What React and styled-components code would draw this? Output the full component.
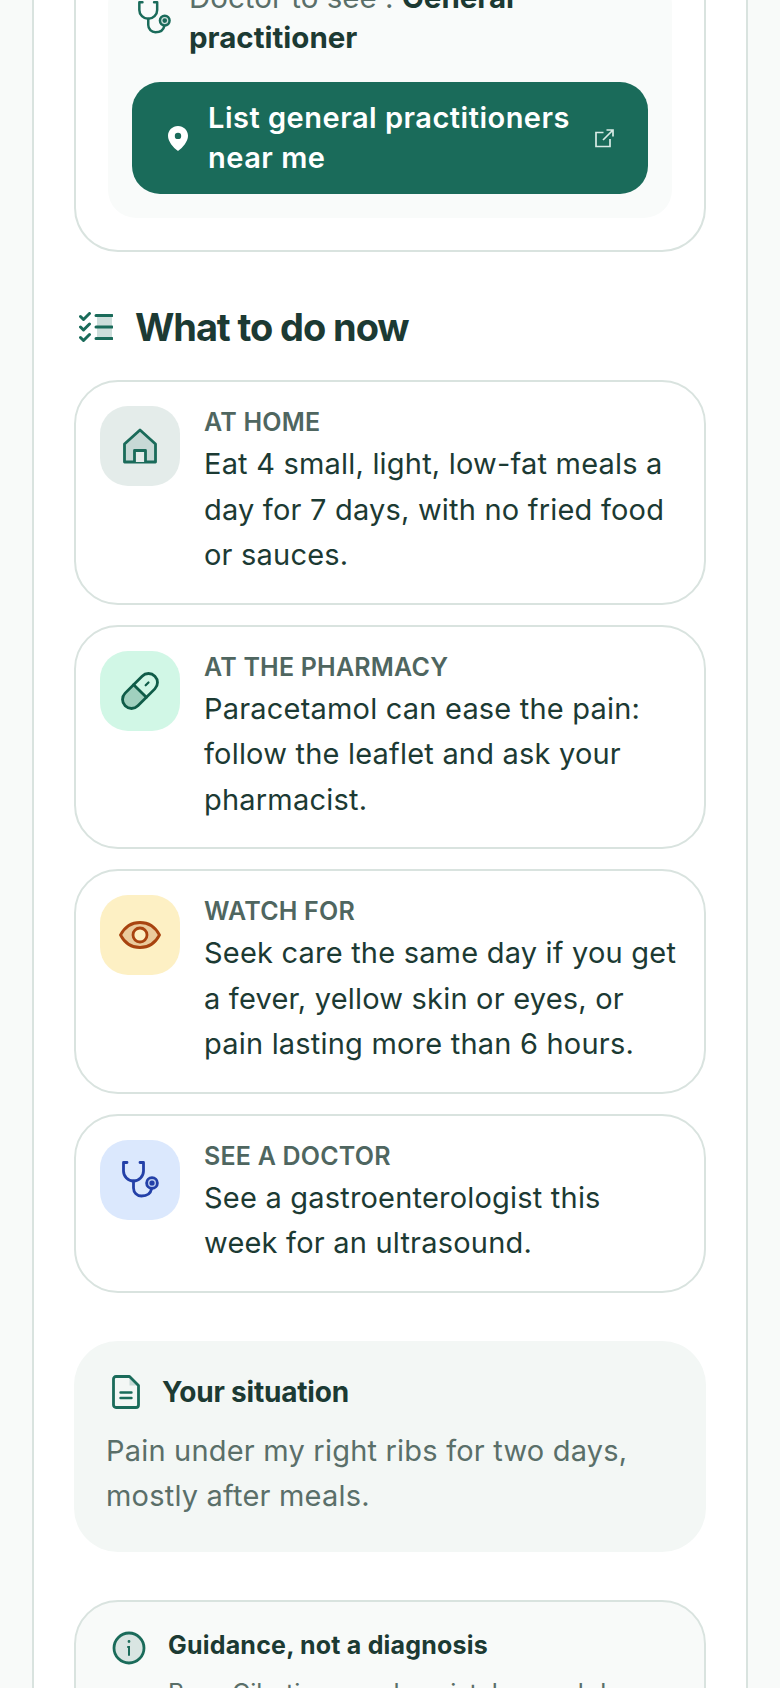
import React from "react"
import styled, { createGlobalStyle } from "styled-components"

const GlobalStyle = createGlobalStyle`
  html, body {
    margin: 0;
    padding: 0;
    height: 1688px;
    overflow: hidden;
    background: #f8faf9;
  }
  * {
    box-sizing: border-box;
  }
`

const Page = styled.main`
  width: 716px;
  height: 1688px;
  margin: 0 auto 0 32px;
  padding: 0 40px;
  background: #fff;
  border-left: 2px solid #d9e3df;
  border-right: 2px solid #d9e3df;
  overflow: hidden;
  font-family: Inter, "Liberation Sans", sans-serif;
  color: #1c3a33;
`

const TopCard = styled.section`
  margin-top: -60px;
  padding: 0 32px 32px;
  border: 2px solid #d9e3df;
  border-top: 0;
  border-radius: 0 0 44px 44px;
  height: 312px;
  display: flex;
  flex-direction: column;
  justify-content: flex-end;
`

const DoctorPanel = styled.div`
  background: #f9fbfa;
  border-radius: 28px;
  padding: 0 24px 24px;
`

const DoctorRow = styled.div`
  display: flex;
  gap: 18px;
  align-items: center;
  margin-bottom: 25px;
  padding-left: 6px;
  color: #1a6b5a;
`

const DoctorText = styled.p`
  margin: 0;
  font-size: 29.5px;
  line-height: 40px;
  color: #5a6f69;

  b {
    font-weight: 700;
    color: #1c3a33;
  }
`

const ActionButton = styled.a`
  display: flex;
  align-items: center;
  gap: 20px;
  height: 112px;
  padding: 0 34px 0 36px;
  border-radius: 28px;
  background: #1a6b5a;
  color: #fff;
  font-size: 29px;
  font-weight: 600;
  letter-spacing: 0.5px;
  line-height: 40px;

  span {
    flex: 1;
  }
`

const SectionTitle = styled.h2`
  display: flex;
  align-items: center;
  gap: 22px;
  margin: 51px 0 29px 5px;
  font-size: 38px;
  line-height: 48px;
  font-weight: 700;
  letter-spacing: -1.1px;
  color: #1c3a33;
`

const StepList = styled.div`
  display: flex;
  flex-direction: column;
  gap: 20px;
`

const StepCard = styled.article`
  display: flex;
  gap: 24px;
  padding: 24px 24px 25px;
  border: 2px solid #d9e3df;
  border-radius: 44px;
  background: #fff;
`

const IconTile = styled.div`
  flex: none;
  width: 80px;
  height: 80px;
  display: flex;
  align-items: center;
  justify-content: center;
  border-radius: 28px;
  background: ${p => p.$bg};
  color: ${p => p.$fg};
`

const StepLabel = styled.div`
  margin-bottom: 3px;
  font-size: 25px;
  line-height: 32px;
  font-weight: 600;
  letter-spacing: 0.2px;
  color: #4f6660;
  text-transform: uppercase;
`

const StepText = styled.p`
  margin: 0;
  font-size: 29px;
  line-height: 45.5px;
  letter-spacing: 0.2px;
  color: #1c3a33;
`

const SituationPanel = styled.section`
  margin-top: 48px;
  padding: 31px 32px;
  height: 211px;
  border-radius: 44px;
  background: #f3f7f5;
`

const SituationTitle = styled.h3`
  display: flex;
  align-items: center;
  gap: 22px;
  margin: 0 0 16px;
  padding-left: 6px;
  font-size: 28px;
  line-height: 40px;
  font-weight: 700;
  letter-spacing: -0.2px;
  color: #1c3a33;
`

const SituationText = styled.p`
  margin: 0;
  font-size: 29px;
  line-height: 45px;
  letter-spacing: 0.2px;
  color: #5a6f69;
`

const NoticeCard = styled.section`
  display: flex;
  gap: 22px;
  margin-top: 48px;
  padding: 29px 44px 30px 36px;
  border: 2px solid #d9e3df;
  border-radius: 44px;
  background: #f8faf9;
`

const NoticeTitle = styled.h3`
  margin: 0 0 14px;
  font-size: 25px;
  line-height: 28px;
  font-weight: 700;
  letter-spacing: 0.2px;
  color: #1c3a33;
`

const NoticeText = styled.p`
  margin: 0;
  font-size: 25px;
  line-height: 40px;
  color: #5a6f69;
`

const Stethoscope = ({ width = 37, height = 37 }) => (
  <svg width={width} height={height} viewBox="0 0 37 37" fill="none" stroke="currentColor" strokeWidth="2.8" strokeLinecap="round" strokeLinejoin="round" style={{ flex: "none" }}>
    <path d="M5 1.5H1.5V10a10 10 0 0 0 20 0V1.5H18" />
    <path d="M11.5 20v7a8 8 0 0 0 8 8c5 0 9-2 10-7" />
    <circle cx="30" cy="22" r="5.4" fill="currentColor" fillOpacity="0.18" />
    <circle cx="30" cy="22" r="1.2" fill="currentColor" />
  </svg>
)

const HomeIcon = () => (
  <svg width="36" height="36" viewBox="0 0 36 36" fill="none" stroke="currentColor" strokeWidth="2.8" strokeLinejoin="round">
    <path d="M18 2 2.5 16v18h31V16z" fill="currentColor" fillOpacity="0.14" />
    <path d="M12.5 34V22.5h11V34" fill="#e4ecea" />
  </svg>
)

const PillIcon = () => (
  <svg width="38" height="38" viewBox="0 0 38 38" fill="none" stroke="currentColor" strokeWidth="2.8" strokeLinecap="round">
    <g transform="translate(19 19) rotate(45)">
      <path d="M-9 0H9V12a9 9 0 0 1-18 0z" fill="currentColor" fillOpacity="0.25" stroke="none" />
      <rect x="-9" y="-21" width="18" height="42" rx="9" />
      <path d="M-9 0H9" />
      <path d="M0-12V-8" strokeWidth="2.2" />
    </g>
  </svg>
)

const EyeIcon = () => (
  <svg width="42" height="28" viewBox="0 0 42 28" fill="none" stroke="currentColor" strokeWidth="2.8" strokeLinejoin="round">
    <path d="M1.5 14C6 5.5 13 1.5 21 1.5S36 5.5 40.5 14C36 22.5 29 26.5 21 26.5S6 22.5 1.5 14z" fill="currentColor" fillOpacity="0.22" />
    <circle cx="21" cy="14" r="7" fill="#fdf0c4" />
  </svg>
)

const DocIcon = () => (
  <svg width="28" height="34" viewBox="0 0 28 34" fill="none" stroke="#1a6b5a" strokeWidth="2.8" strokeLinejoin="round" strokeLinecap="round" style={{ flex: "none" }}>
    <path d="M17.5 2v8.5H26z" fill="#1a6b5a" fillOpacity="0.2" stroke="none" />
    <path d="M4 1.5h13.5l9 9V30a2.5 2.5 0 0 1-2.5 2.5H4A2.5 2.5 0 0 1 1.5 30V4A2.5 2.5 0 0 1 4 1.5z" />
    <path d="M8.5 17.5h11M8.5 23h11" strokeWidth="2.4" />
  </svg>
)

const InfoIcon = () => (
  <svg width="34" height="34" viewBox="0 0 34 34" fill="none" stroke="#1a6b5a" strokeWidth="2.8" strokeLinecap="round" style={{ flex: "none" }}>
    <circle cx="17" cy="17" r="15" fill="#1a6b5a" fillOpacity="0.14" />
    <path d="M16 16h1v8" strokeWidth="2" />
    <circle cx="17" cy="10.5" r="0.6" fill="#1a6b5a" strokeWidth="1.6" />
  </svg>
)

const ChecklistIcon = () => (
  <svg width="34" height="30" viewBox="0 0 34 30" fill="none" stroke="#1a6b5a" strokeWidth="3" strokeLinecap="round" strokeLinejoin="round" style={{ flex: "none" }}>
    <rect x="18" y="3.5" width="15" height="23" fill="#1a6b5a" fillOpacity="0.22" stroke="none" />
    <path d="M1.5 4.5 4.5 7.5 10.5 1.5M1.5 15 4.5 18 10.5 12M1.5 25.5 4.5 28.5 10.5 22.5" />
    <path d="M17 3.5h16M17 15h16M17 26.5h16" />
  </svg>
)

const PinIcon = () => (
  <svg width="20" height="25" viewBox="0 0 20 25" style={{ flex: "none" }}>
    <path fillRule="evenodd" fill="#fff" d="M10 0c5.5 0 10 4.3 10 9.7 0 5.7-5 11.6-10 15.3C5 21.3 0 15.4 0 9.7 0 4.3 4.5 0 10 0zm0 6.7a3.2 3.2 0 1 0 0 6.4 3.2 3.2 0 0 0 0-6.4z" />
  </svg>
)

const ExternalIcon = () => (
  <svg width="19" height="19" viewBox="0 0 19 19" fill="none" stroke="#d9ebe6" strokeWidth="1.7" style={{ flex: "none" }}>
    <path d="M8.5 3.5H1v14h14V10" />
    <path d="M8 11 17.5 1.5M11.5 1h6.5v6.5" />
  </svg>
)

const STEPS = [
  {
    label: "At home",
    text: "Eat 4 small, light, low-fat meals a day for 7 days, with no fried food or sauces.",
    bg: "#e4ecea",
    fg: "#1a6b5a",
    icon: <HomeIcon />,
  },
  {
    label: "At the pharmacy",
    text: "Paracetamol can ease the pain: follow the leaflet and ask your pharmacist.",
    bg: "#d1f7e6",
    fg: "#0f5c48",
    icon: <PillIcon />,
  },
  {
    label: "Watch for",
    text: "Seek care the same day if you get a fever, yellow skin or eyes, or pain lasting more than 6 hours.",
    bg: "#fdf0c4",
    fg: "#a8430f",
    icon: <EyeIcon />,
  },
  {
    label: "See a doctor",
    text: "See a gastroenterologist this week for an ultrasound.",
    bg: "#dbe8fd",
    fg: "#2340a8",
    icon: <Stethoscope />,
  },
]

const App = () => (
  <>
    <GlobalStyle />
    <Page>
      <TopCard>
        <DoctorPanel>
          <DoctorRow>
            <Stethoscope width={33} height={33} />
            <DoctorText>
              Doctor to see : <b>General practitioner</b>
            </DoctorText>
          </DoctorRow>
          <ActionButton>
            <PinIcon />
            <span>List general practitioners near me</span>
            <ExternalIcon />
          </ActionButton>
        </DoctorPanel>
      </TopCard>

      <SectionTitle>
        <ChecklistIcon />
        What to do now
      </SectionTitle>

      <StepList>
        {STEPS.map(step => (
          <StepCard key={step.label}>
            <IconTile $bg={step.bg} $fg={step.fg}>
              {step.icon}
            </IconTile>
            <div>
              <StepLabel>{step.label}</StepLabel>
              <StepText>{step.text}</StepText>
            </div>
          </StepCard>
        ))}
      </StepList>

      <SituationPanel>
        <SituationTitle>
          <DocIcon />
          Your situation
        </SituationTitle>
        <SituationText>Pain under my right ribs for two days, mostly after meals.</SituationText>
      </SituationPanel>

      <NoticeCard>
        <InfoIcon />
        <div>
          <NoticeTitle>Guidance, not a diagnosis</NoticeTitle>
          <NoticeText>BarryCibati can make mistakes and does not replace a doctor.</NoticeText>
        </div>
      </NoticeCard>
    </Page>
  </>
)

export default App
